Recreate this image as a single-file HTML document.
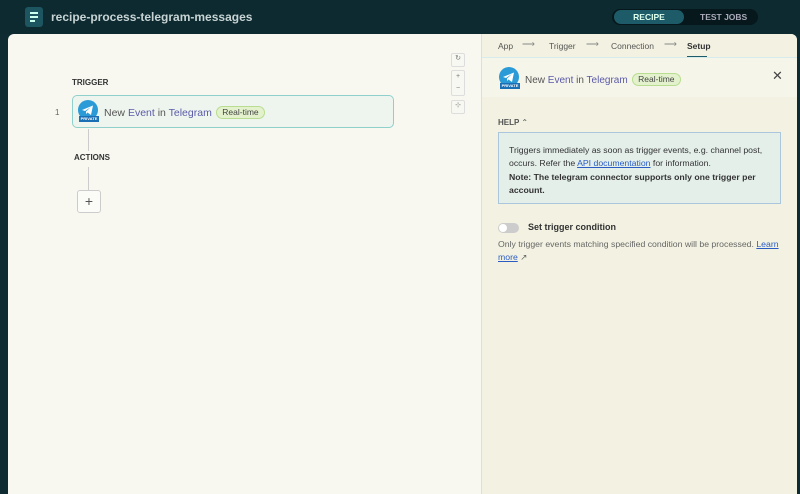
<!DOCTYPE html>
<html><head><meta charset="utf-8"><style>
*{box-sizing:border-box;margin:0;padding:0}
body{width:800px;height:487px;overflow:hidden;background:#0d2b31;font-family:"Liberation Sans",sans-serif;position:relative}
.top{position:absolute;left:0;top:0;width:800px;height:34px;background:#0c2a30}
.doc{position:absolute;left:25px;top:7px;width:18px;height:20px;background:#1d5560;border-radius:3px}
.doc i{position:absolute;left:5px;width:8px;height:1.5px;background:#cfe;}
.title{position:absolute;left:51px;top:10px;color:#c8d4d4;font-weight:bold;font-size:12px}
.tabs{position:absolute;left:612px;top:9px;width:146px;height:16px;background:#06181c;border-radius:9px}
.tabs .r{position:absolute;left:2px;top:1px;width:70px;height:14px;background:#1e5b68;border-radius:8px;color:#dfe;font-size:8.5px;font-weight:bold;text-align:center;line-height:14px}
.tabs .t{position:absolute;left:88px;top:1px;color:#aab;font-size:8.5px;font-weight:bold;line-height:14px}
.card{position:absolute;left:8px;top:34px;width:789px;height:460px;background:#f8f8f1;border-radius:6px 6px 0 0;overflow:hidden}
.lab{position:absolute;font-size:8px;font-weight:bold;color:#333}
.step{position:absolute;left:64px;top:61px;width:322px;height:33px;border:1.5px solid #8fd0cc;border-radius:5px;background:#eef5ee}
.ico{position:absolute;width:20px;height:20px;border-radius:50%;background:#2a9bd6}
.priv{position:absolute;width:20px;height:6px;background:#1b6fb5;color:#fff;font-size:4px;font-weight:bold;text-align:center;line-height:6px}
.txt{font-size:10.5px;color:#555}
.txt b{font-weight:normal;color:#5a5aa8}
.pill{display:inline-block;font-size:8.5px;color:#444;background:#e3f2cd;border:1px solid #b8dd90;border-radius:8px;padding:0 5px;line-height:11px;vertical-align:1px}
.line{position:absolute;left:80px;width:1px;background:#ccc}
.plus{position:absolute;left:69px;top:156px;width:24px;height:23px;border:1px solid #ccc;border-radius:3px;background:#fbfbf7;text-align:center;line-height:21px;font-size:14px;color:#555}
.ctl{position:absolute;left:443px;width:14px;border:1px solid #ddd;border-radius:2px;background:#f8f8f2;font-size:7px;color:#777;text-align:center}
.panel{position:absolute;left:473px;top:0;width:316px;height:460px;background:#f3f2e2;border-left:1px solid #e0e0d0}
.crumb{position:absolute;top:7px;font-size:8.5px;color:#555}
.arr{position:absolute;top:5px;font-size:9px;color:#888}
.hd{position:absolute;left:0;top:23px;width:316px;height:40px;background:#f6f5ea;border-top:1px solid #d6ecec}
.help{position:absolute;left:16px;top:98px;width:283px;height:72px;background:#e4efea;border:1px solid #a9c6dc;padding:11px 10px;font-size:8.7px;line-height:13.4px;color:#333}
a{color:#2a5cc4;text-decoration:underline}
</style></head><body>
<div class="top">
<div class="doc"><i style="top:5px"></i><i style="top:9px"></i><i style="top:13px;width:5px"></i></div>
<div class="title">recipe-process-telegram-messages</div>
<div class="tabs"><div class="r">RECIPE</div><div class="t">TEST JOBS</div></div>
</div>
<div class="card">
<div class="lab" style="left:64px;top:44px">TRIGGER</div>
<div style="position:absolute;left:47px;top:74px;font-size:8px;color:#666">1</div>
<div class="step">
<div class="ico" style="left:5px;top:4px"><svg width="20" height="20" viewBox="0 0 20 20"><path d="M4 10 L15 5.5 L13 15 L9.5 12.5 L8 14 L8 11.5 L13 7 L7 11 Z" fill="#fff"/></svg></div><div class="priv" style="left:6px;top:20px">PRIVATE</div>
<div style="position:absolute;left:31px;top:7px"><span class="txt">New <b>Event</b> in <b>Telegram</b></span> <span class="pill">Real-time</span></div>
</div>
<div class="line" style="top:95px;height:22px"></div>
<div class="lab" style="left:66px;top:119px">ACTIONS</div>
<div class="line" style="top:133px;height:23px"></div>
<div class="plus">+</div>
<div class="ctl" style="top:19px;height:14px">↻</div>
<div class="ctl" style="top:36px;height:26px;line-height:12px">+<br>−</div>
<div class="ctl" style="top:66px;height:14px">⊹</div>
<div class="panel">
<span class="crumb" style="left:16px">App</span><span class="arr" style="left:40px">⟶</span>
<span class="crumb" style="left:67px">Trigger</span><span class="arr" style="left:104px">⟶</span>
<span class="crumb" style="left:129px">Connection</span><span class="arr" style="left:182px">⟶</span>
<span class="crumb" style="left:205px;font-weight:bold;color:#333">Setup</span>
<div style="position:absolute;left:205px;top:22px;width:20px;height:1.5px;background:#1e5b68"></div>
<div class="hd">
<div class="ico" style="left:17px;top:9px"><svg width="20" height="20" viewBox="0 0 20 20"><path d="M4 10 L15 5.5 L13 15 L9.5 12.5 L8 14 L8 11.5 L13 7 L7 11 Z" fill="#fff"/></svg></div><div class="priv" style="left:18px;top:25px">PRIVATE</div>
<div style="position:absolute;left:43px;top:12px"><span class="txt" style="font-size:10px">New <b>Event</b> in <b>Telegram</b></span> <span class="pill">Real-time</span></div>
<div style="position:absolute;left:290px;top:10px;font-size:13px;color:#444">✕</div>
</div>
<div class="lab" style="left:16px;top:84px;color:#555">HELP <span style="font-weight:normal">⌃</span></div>
<div class="help">Triggers immediately as soon as trigger events, e.g. channel post, occurs. Refer the <a>API documentation</a> for information.<br><b>Note: The telegram connector supports only one trigger per account.</b></div>
<div style="position:absolute;left:16px;top:189px;width:21px;height:10px;border-radius:6px;background:#ccc"><div style="position:absolute;left:1px;top:1px;width:8px;height:8px;border-radius:50%;background:#fff"></div></div>
<div style="position:absolute;left:46px;top:188px;font-size:9px;font-weight:bold;color:#333">Set trigger condition</div>
<div style="position:absolute;left:16px;top:204px;width:290px;font-size:8.7px;line-height:13px;color:#666">Only trigger events matching specified condition will be processed. <a>Learn more</a> ↗</div>
</div>
</div>
</body></html>
